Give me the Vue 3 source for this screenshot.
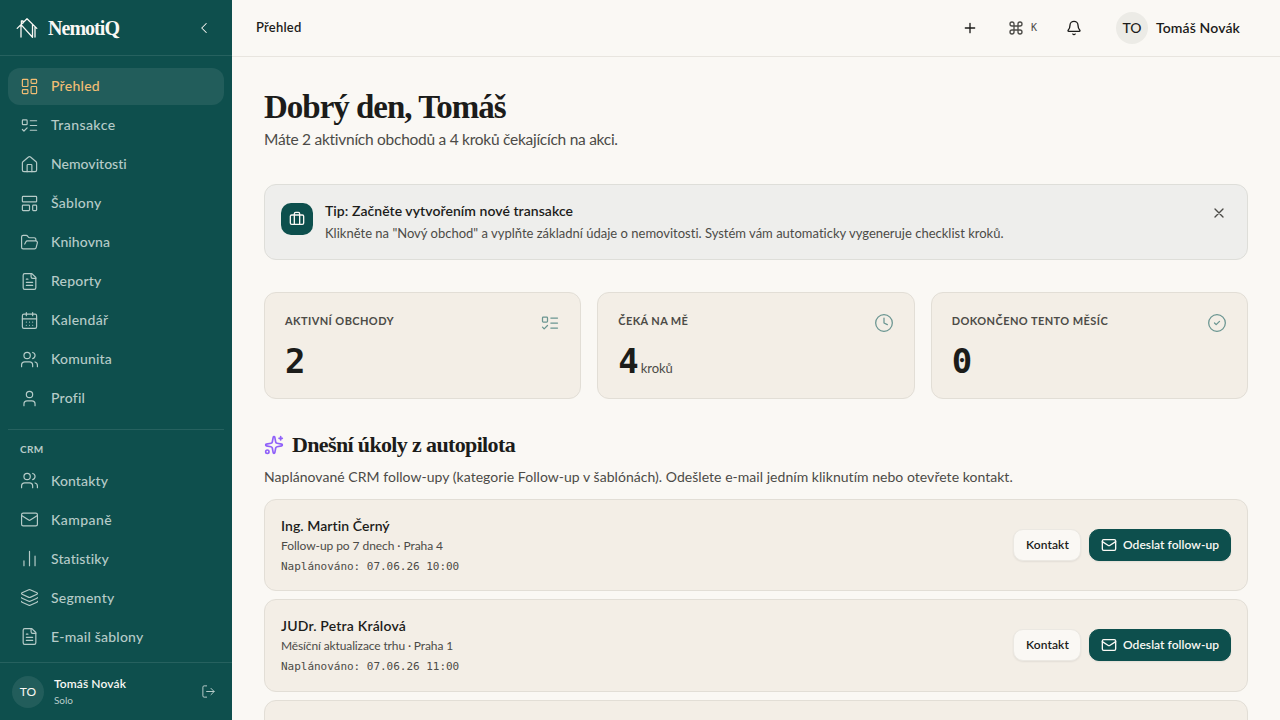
<script setup>
import { h } from 'vue'

const icons = {
  dashboard: '<rect width="7" height="9" x="3" y="3" rx="1"/><rect width="7" height="5" x="14" y="3" rx="1"/><rect width="7" height="9" x="14" y="12" rx="1"/><rect width="7" height="5" x="3" y="16" rx="1"/>',
  todo: '<rect x="3" y="5" width="6" height="6" rx="1"/><path d="m3 17 2 2 4-4M13 6h8M13 12h8M13 18h8"/>',
  house: '<path d="M15 21v-8a1 1 0 0 0-1-1h-4a1 1 0 0 0-1 1v8"/><path d="M3 10a2 2 0 0 1 .709-1.528l7-5.999a2 2 0 0 1 2.582 0l7 5.999A2 2 0 0 1 21 10v9a2 2 0 0 1-2 2H5a2 2 0 0 1-2-2z"/>',
  template: '<rect width="18" height="7" x="3" y="3" rx="1"/><rect width="9" height="7" x="3" y="14" rx="1"/><rect width="5" height="7" x="16" y="14" rx="1"/>',
  folder: '<path d="m6 14 1.5-2.9A2 2 0 0 1 9.24 10H20a2 2 0 0 1 1.94 2.5l-1.54 6a2 2 0 0 1-1.95 1.5H4a2 2 0 0 1-2-2V5a2 2 0 0 1 2-2h3.9a2 2 0 0 1 1.69.9l.81 1.2a2 2 0 0 0 1.67.9H18a2 2 0 0 1 2 2v2"/>',
  file: '<path d="M15 2H6a2 2 0 0 0-2 2v16a2 2 0 0 0 2 2h12a2 2 0 0 0 2-2V7Z"/><path d="M14 2v4a2 2 0 0 0 2 2h4M10 9H8M16 13H8M16 17H8"/>',
  calendar: '<path d="M8 2v4M16 2v4M3 10h18M8 14h.01M12 14h.01M16 14h.01M8 18h.01M12 18h.01M16 18h.01"/><rect width="18" height="18" x="3" y="4" rx="2"/>',
  users: '<path d="M16 21v-2a4 4 0 0 0-4-4H6a4 4 0 0 0-4 4v2"/><circle cx="9" cy="7" r="4"/><path d="M22 21v-2a4 4 0 0 0-3-3.87M16 3.13a4 4 0 0 1 0 7.75"/>',
  user: '<path d="M19 21v-2a4 4 0 0 0-4-4H9a4 4 0 0 0-4 4v2"/><circle cx="12" cy="7" r="4"/>',
  mail: '<rect width="20" height="16" x="2" y="4" rx="2"/><path d="m22 7-8.97 5.7a1.94 1.94 0 0 1-2.06 0L2 7"/>',
  chart: '<path d="M5 21v-6M12 21V3M19 21V9"/>',
  layers: '<path d="M12.83 2.18a2 2 0 0 0-1.66 0L2.6 6.08a1 1 0 0 0 0 1.83l8.58 3.91a2 2 0 0 0 1.66 0l8.58-3.9a1 1 0 0 0 0-1.83z"/><path d="M2 12a1 1 0 0 0 .58.91l8.6 3.91a2 2 0 0 0 1.65 0l8.58-3.9A1 1 0 0 0 22 12"/><path d="M2 17a1 1 0 0 0 .58.91l8.6 3.91a2 2 0 0 0 1.65 0l8.58-3.9A1 1 0 0 0 22 17"/>',
  logout: '<path d="m16 17 5-5-5-5M21 12H9M9 21H5a2 2 0 0 1-2-2V5a2 2 0 0 1 2-2h4"/>',
  chevron: '<path d="m15 18-6-6 6-6"/>',
  plus: '<path d="M5 12h14M12 5v14"/>',
  command: '<path d="M15 6v12a3 3 0 1 0 3-3H6a3 3 0 1 0 3 3V6a3 3 0 1 0-3 3h12a3 3 0 1 0-3-3"/>',
  bell: '<path d="M10.268 21a2 2 0 0 0 3.464 0"/><path d="M3.262 15.326A1 1 0 0 0 4 17h16a1 1 0 0 0 .74-1.673C19.41 13.956 18 12.499 18 8A6 6 0 0 0 6 8c0 4.499-1.411 5.956-2.738 7.326"/>',
  close: '<path d="M18 6 6 18M6 6l12 12"/>',
  briefcase: '<path d="M16 20V4a2 2 0 0 0-2-2h-4a2 2 0 0 0-2 2v16"/><rect width="20" height="14" x="2" y="6" rx="2"/>',
  clock: '<circle cx="12" cy="12" r="10"/><path d="M12 6v6l4 2"/>',
  check: '<circle cx="12" cy="12" r="10"/><path d="m9 12 2 2 4-4"/>',
  sparkles: '<path d="M11.017 2.814a1 1 0 0 1 1.966 0l1.051 5.558a2 2 0 0 0 1.594 1.594l5.558 1.051a1 1 0 0 1 0 1.966l-5.558 1.051a2 2 0 0 0-1.594 1.594l-1.051 5.558a1 1 0 0 1-1.966 0l-1.051-5.558a2 2 0 0 0-1.594-1.594l-5.558-1.051a1 1 0 0 1 0-1.966l5.558-1.051a2 2 0 0 0 1.594-1.594zM20 2v4M22 4h-4"/><circle cx="4" cy="20" r="2"/>',
}

const Icon = (props) =>
  h('svg', {
    width: props.size,
    height: props.size,
    viewBox: '0 0 24 24',
    fill: 'none',
    stroke: 'currentColor',
    'stroke-width': props.stroke || 2,
    'stroke-linecap': 'round',
    'stroke-linejoin': 'round',
    'aria-hidden': 'true',
    innerHTML: icons[props.name],
  })
Icon.props = ['name', 'size', 'stroke']

// Tracks a single-line label so that it takes up the given width in pixels.
const vFit = {
  mounted(el, { value }) {
    const range = document.createRange()
    range.selectNodeContents(el)
    const natural = range.getBoundingClientRect().width
    el.style.letterSpacing = `${(value - natural) / el.textContent.length}px`
  },
}

const mainNav = [
  { label: 'Přehled', icon: 'dashboard', width: 49, active: true },
  { label: 'Transakce', icon: 'todo', width: 64.5 },
  { label: 'Nemovitosti', icon: 'house', width: 76 },
  { label: 'Šablony', icon: 'template', width: 50.5 },
  { label: 'Knihovna', icon: 'folder', width: 59 },
  { label: 'Reporty', icon: 'file', width: 50.5 },
  { label: 'Kalendář', icon: 'calendar', width: 57.5 },
  { label: 'Komunita', icon: 'users', width: 61 },
  { label: 'Profil', icon: 'user', width: 34 },
]
const crmNav = [
  { label: 'Kontakty', icon: 'users', width: 57 },
  { label: 'Kampaně', icon: 'mail', width: 61 },
  { label: 'Statistiky', icon: 'chart', width: 58.5 },
  { label: 'Segmenty', icon: 'layers', width: 63.5 },
  { label: 'E-mail šablony', icon: 'file', width: 92.5 },
]
const stats = [
  { label: 'Aktivní obchody', value: '2', icon: 'todo', width: 109 },
  { label: 'Čeká na mě', value: '4', unit: 'kroků', icon: 'clock', width: 70 },
  { label: 'Dokončeno tento měsíc', value: '0', icon: 'check', width: 156.5 },
]
const tasks = [
  { name: 'Ing. Martin Černý', nameWidth: 109, info: 'Follow-up po 7 dnech · Praha 4', infoWidth: 162, date: 'Naplánováno: 07.06.26 10:00' },
  { name: 'JUDr. Petra Králová', nameWidth: 125, info: 'Měsíční aktualizace trhu · Praha 1', infoWidth: 172, date: 'Naplánováno: 07.06.26 11:00' },
]
</script>

<template>
  <div class="app">
    <aside class="sidebar">
      <div class="brand">
        <svg class="logo" width="22" height="22" viewBox="0 0 22 22" fill="none" stroke="currentColor" stroke-width="1.3" stroke-linecap="round" stroke-linejoin="round" aria-hidden="true">
          <path d="M1.2 11.4 11 1.8l9.8 9.6M5 20V7.6l11.5 12.6V7.4M19 20V10.2M7 6V3.8H5.4v3.4" />
        </svg>
        <span class="wordmark"><span v-fit="71">NemotiQ</span></span>
        <Icon class="collapse" name="chevron" :size="18" :stroke="1.4" />
      </div>
      <nav class="nav">
        <a v-for="item in mainNav" :key="item.label" class="nav-item" :class="{ active: item.active }">
          <Icon :name="item.icon" :size="19" :stroke="1.5" />
          <span class="nav-label"><span v-fit="item.width">{{ item.label }}</span></span>
        </a>
        <div class="divider"></div>
        <div class="nav-heading"><span v-fit="23.5">CRM</span></div>
        <a v-for="item in crmNav" :key="item.label" class="nav-item">
          <Icon :name="item.icon" :size="19" :stroke="1.5" />
          <span v-fit="item.width">{{ item.label }}</span>
        </a>
      </nav>
      <div class="account">
        <span class="avatar dark">TO</span>
        <div class="account-text">
          <div class="account-name"><span v-fit="72">Tomáš Novák</span></div>
          <div class="account-plan"><span v-fit="19">Solo</span></div>
        </div>
        <Icon class="logout" name="logout" :size="15" :stroke="1.6" />
      </div>
    </aside>

    <div class="main">
      <header class="topbar">
        <span class="crumb"><span v-fit="45.5">Přehled</span></span>
        <div class="tools">
          <Icon class="plus" name="plus" :size="16" />
          <span class="shortcut"><Icon name="command" :size="16" /><kbd>K</kbd></span>
          <Icon class="bell" name="bell" :size="16" />
          <span class="avatar light">TO</span>
          <span class="who"><span v-fit="84">Tomáš Novák</span></span>
        </div>
      </header>

      <main class="content">
        <h1><span v-fit="241.5">Dobrý den, Tomáš</span></h1>
        <p class="lead"><span v-fit="354">Máte 2 aktivních obchodů a 4 kroků čekajících na akci.</span></p>

        <section class="tip">
          <span class="tip-icon"><Icon name="briefcase" :size="16" /></span>
          <div class="tip-text">
            <div class="tip-title"><span v-fit="248">Tip: Začněte vytvořením nové transakce</span></div>
            <div class="tip-body"><span v-fit="679">Klikněte na "Nový obchod" a vyplňte základní údaje o nemovitosti. Systém vám automaticky vygeneruje checklist kroků.</span></div>
          </div>
          <Icon class="tip-close" name="close" :size="16" />
        </section>

        <section class="stats">
          <article v-for="stat in stats" :key="stat.label" class="stat">
            <div class="stat-head">
              <span class="stat-label"><span v-fit="stat.width">{{ stat.label }}</span></span>
              <Icon :name="stat.icon" :size="20" :stroke="1.5" />
            </div>
            <div class="stat-value">
              <span class="number">{{ stat.value }}</span><span v-if="stat.unit" v-fit="32" class="unit">{{ stat.unit }}</span>
            </div>
          </article>
        </section>

        <h2><Icon class="spark" name="sparkles" :size="20" /><span v-fit="223">Dnešní úkoly z autopilota</span></h2>
        <p class="hint"><span v-fit="749">Naplánované CRM follow-upy (kategorie Follow-up v šablónách). Odešlete e-mail jedním kliknutím nebo otevřete kontakt.</span></p>

        <div class="tasks">
          <article v-for="task in tasks" :key="task.name" class="task">
            <div class="task-text">
              <div class="task-name"><span v-fit="task.nameWidth">{{ task.name }}</span></div>
              <div class="task-info"><span v-fit="task.infoWidth">{{ task.info }}</span></div>
              <div class="task-date"><span v-fit="178.2">{{ task.date }}</span></div>
            </div>
            <button class="btn">
              <span v-fit="43">Kontakt</span>
            </button>
            <button class="btn primary">
              <Icon name="mail" :size="16" />
              <span v-fit="96">Odeslat follow-up</span>
            </button>
          </article>
          <article class="task"></article>
        </div>
      </main>
    </div>
  </div>
</template>

<style>
body {
  margin: 0;
  overflow: hidden;
}
</style>

<style scoped>
.app {
  display: flex;
  width: 1280px;
  height: 720px;
  overflow: hidden;
  background: #faf8f4;
  color: #1c1c1a;
  font-family: Lato, "Noto Sans", sans-serif;
  white-space: nowrap;
}
svg {
  flex: none;
  display: block;
}
.sidebar {
  flex: none;
  display: flex;
  flex-direction: column;
  width: 232px;
  background: #0e4f4d;
  color: #b6cbc8;
}
.brand {
  box-sizing: border-box;
  flex: none;
  display: flex;
  align-items: center;
  height: 56px;
  padding: 0 19px 0 16px;
  border-bottom: 1px solid #26615f;
  color: #faf8f4;
}
.wordmark {
  flex: 1;
  margin-left: 10px;
  font: bold 20px/28px "Liberation Serif", serif;
}
.nav {
  flex: 1;
  min-height: 0;
  display: flex;
  flex-direction: column;
  gap: 2px;
  padding: 12px 8px 0;
  overflow: hidden;
}
.nav-item {
  flex: none;
  display: flex;
  align-items: center;
  gap: 12px;
  height: 37px;
  padding: 0 12px;
  border-radius: 12px;
  font-size: 14px;
  font-weight: 500;
}
.nav-label {
  padding-bottom: 2px;
}
.nav-item.active {
  background: #225d5b;
  color: #f2bd74;
}
.divider {
  flex: none;
  height: 1px;
  margin: 10px 0;
  background: #26615f;
}
.nav-heading {
  flex: none;
  height: 17px;
  padding: 0 12px;
  margin-bottom: 1px;
  font-size: 10px;
  font-weight: 700;
  line-height: 15px;
}
.account {
  box-sizing: border-box;
  flex: none;
  display: flex;
  align-items: center;
  height: 58px;
  padding: 0 16px 0 12px;
  border-top: 1px solid #26615f;
}
.avatar {
  flex: none;
  width: 32px;
  border-radius: 50%;
  text-align: center;
  line-height: 32px;
}
.avatar.dark {
  background: #225d5b;
  color: #faf8f4;
  font-size: 12px;
}
.avatar.light {
  margin-left: 34px;
  background: #ecebe6;
  font-size: 14px;
  font-weight: 500;
}
.account-text {
  flex: 1;
  margin-left: 10px;
}
.account-name {
  padding-bottom: 2px;
  color: #faf8f4;
  font-size: 12px;
  font-weight: 600;
  line-height: 15px;
}
.account-plan {
  font-size: 10px;
  line-height: 15px;
}
.main {
  flex: 1;
  min-width: 0;
}
.topbar {
  box-sizing: border-box;
  display: flex;
  align-items: center;
  justify-content: space-between;
  height: 57px;
  padding: 0 40px 0 24px;
  border-bottom: 1px solid #e8e5df;
}
.crumb {
  padding-bottom: 2px;
  font-size: 13px;
  font-weight: 600;
}
.tools {
  display: flex;
  align-items: center;
}
.shortcut {
  display: flex;
  align-items: center;
  gap: 7px;
  margin: 0 29px 0 30px;
  color: #4c4b47;
}
kbd {
  width: 6px;
  font: 10px/14px "DejaVu Sans Mono", monospace;
}
.who {
  margin-left: 8px;
  padding-bottom: 2px;
  font-size: 14px;
  font-weight: 600;
}
.content {
  padding: 32px 32px 0;
}
h1 {
  margin: 0;
  font: bold 33px/36px "Liberation Serif", serif;
}
p {
  margin: 0;
  color: #4c4b47;
}
.lead {
  margin-top: 2px;
  font-size: 15.5px;
  line-height: 24px;
}
.tip {
  box-sizing: border-box;
  display: flex;
  height: 76px;
  margin-top: 33px;
  padding: 16px;
  border: 1px solid #deded9;
  border-radius: 12px;
  background: #eeeeec;
}
.tip-icon {
  display: grid;
  place-items: center;
  width: 32px;
  height: 32px;
  margin-top: 2px;
  border-radius: 10px;
  background: #0d4f4d;
  color: #faf8f4;
}
.tip-text {
  flex: 1;
  margin-left: 12px;
}
.tip-title {
  font-size: 14px;
  font-weight: 600;
  line-height: 19px;
}
.tip-body {
  margin-top: 3px;
  color: #4c4b47;
  font-size: 13px;
  line-height: 20px;
}
.tip-close {
  margin: 4px 4px 0 0;
  color: #4c4b47;
}
.stats {
  display: grid;
  grid-template-columns: repeat(3, 1fr);
  gap: 16px;
  margin-top: 32px;
}
.stat {
  box-sizing: border-box;
  height: 107px;
  padding: 20px;
  border: 1px solid #e2ded6;
  border-radius: 12px;
  background: #f3eee6;
}
.stat-head {
  display: flex;
  justify-content: space-between;
  color: #6a9591;
}
.stat-label {
  color: #4c4b47;
  font-size: 11px;
  font-weight: 700;
  line-height: 16px;
  text-transform: uppercase;
}
.stat-value {
  display: flex;
  align-items: baseline;
  margin-top: 7px;
  font: bold 34px/42px "DejaVu Sans Mono", monospace;
}
.number {
  letter-spacing: -1px;
}
.unit {
  margin-left: 3px;
  color: #4c4b47;
  font: 13px/20px Lato, "Noto Sans", sans-serif;
}
h2 {
  display: flex;
  align-items: center;
  gap: 8px;
  margin: 32px 0 0;
  font: bold 22px/28px "Liberation Serif", serif;
}
.spark {
  color: #9061f9;
}
.hint {
  margin-top: 7px;
  font-size: 14px;
  line-height: 22px;
}
.tasks {
  display: flex;
  flex-direction: column;
  gap: 8px;
  margin-top: 10.8px;
}
.task {
  box-sizing: border-box;
  display: flex;
  align-items: center;
  gap: 8px;
  height: 92.4px;
  padding: 0 16px;
  border: 1px solid #e2ded6;
  border-radius: 12px;
  background: #f3eee6;
}
.task-text {
  flex: 1;
}
.task-name {
  font-size: 14px;
  font-weight: 600;
  line-height: 21px;
}
.task-info {
  color: #4c4b47;
  font-size: 12px;
  line-height: 19px;
}
.task-date {
  margin: 2px 0 -2px;
  color: #4c4b47;
  font: 11px/20px "DejaVu Sans Mono", monospace;
}
.btn {
  box-sizing: border-box;
  display: flex;
  align-items: center;
  gap: 6px;
  height: 32px;
  padding: 0 11px 0 12px;
  border: 1px solid #ebe8e2;
  border-radius: 10px;
  background: #faf8f4;
  box-shadow: 0 1px 2px rgb(0 0 0 / 7%);
  color: #1c1c1a;
  font: 600 12px/18px Lato, "Noto Sans", sans-serif;
}
.btn.primary {
  padding-left: 11px;
  border-color: #0d4f4d;
  background: #0d4f4d;
  color: #faf8f4;
}
</style>
